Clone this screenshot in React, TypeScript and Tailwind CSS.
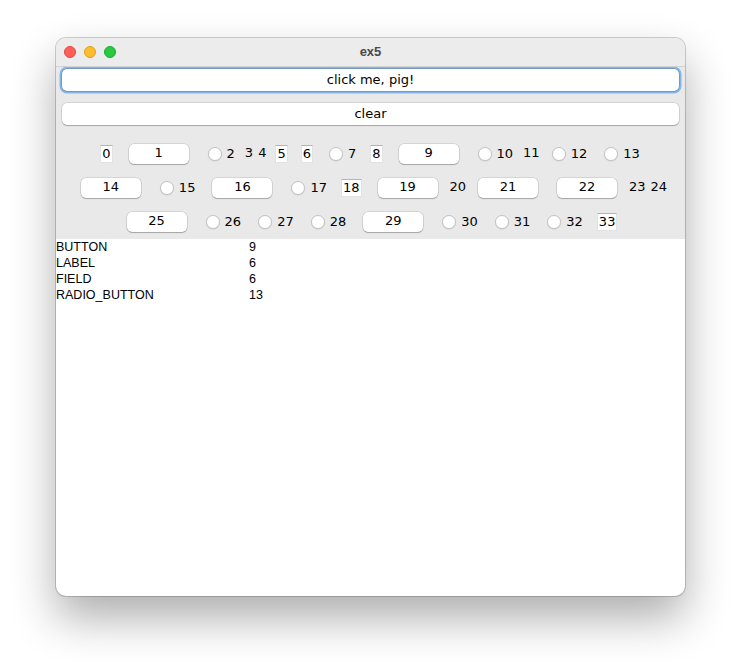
import type { ReactNode } from "react";

type Item =
	| { kind: "button"; text: string }
	| { kind: "radio"; text: string }
	| { kind: "label"; text: string }
	| { kind: "field"; text: string };

const b = (text: string): Item => ({ kind: "button", text });
const r = (text: string): Item => ({ kind: "radio", text });
const l = (text: string): Item => ({ kind: "label", text });
const f = (text: string): Item => ({ kind: "field", text });

const rows: Item[][] = [
	[f("0"), b("1"), r("2"), l("3"), l("4"), f("5"), f("6"), r("7"), f("8"), b("9"), r("10"), l("11"), r("12"), r("13")],
	[b("14"), r("15"), b("16"), r("17"), f("18"), b("19"), l("20"), b("21"), b("22"), l("23"), l("24")],
	[b("25"), r("26"), r("27"), r("28"), b("29"), r("30"), r("31"), r("32"), f("33")],
];

const counts = [
	["BUTTON", "9"],
	["LABEL", "6"],
	["FIELD", "6"],
	["RADIO_BUTTON", "13"],
];

function Control({ item }: { item: Item }) {
	if (item.kind === "button") {
		return (
			<div className="px-[7px]">
				<div className="flex h-5 w-[60px] items-center justify-center rounded-[5px] bg-white pb-px shadow-[0_0_0_0.5px_rgba(0,0,0,0.18),0_1px_1px_rgba(0,0,0,0.22)]">
					{item.text}
				</div>
			</div>
		);
	}
	if (item.kind === "radio") {
		return (
			<div className="flex items-center pr-[5px] pl-[7px]">
				<span className="size-[14px] rounded-full border border-[#c4c4c4] bg-white shadow-[0_0.5px_1px_rgba(0,0,0,0.12)]" />
				<span className="ml-[5px] pt-px">{item.text}</span>
			</div>
		);
	}
	if (item.kind === "field") {
		return (
			<div className="px-[4px]">
				<div className="flex h-[18px] items-center border border-[#e2e2e2] border-t-[#b4b4b4] bg-white px-px leading-none">
					{item.text}
				</div>
			</div>
		);
	}
	return <span className="-mt-px">{item.text}</span>;
}

function Row({ children }: { children: ReactNode }) {
	return <div className="flex h-[29px] items-center justify-center gap-[5px]">{children}</div>;
}

export default function App() {
	return (
		<div className="min-h-[670px] bg-white pt-[38px] pl-[56px] font-['DejaVu_Sans',sans-serif] text-[13px] text-black">
			<div className="flex h-[558px] w-[629px] flex-col overflow-hidden rounded-[10px] bg-white shadow-[0_22px_45px_rgba(0,0,0,0.32),0_0_0_1px_rgba(0,0,0,0.18)]">
				{/* title bar */}
				<div className="relative flex h-[29px] shrink-0 items-center border-b border-[#d2d2d2] bg-[#ececec] px-[8px]">
					<div className="flex gap-[8px]">
						<span className="size-3 rounded-full border border-[#e2463f] bg-[#fe5f57]" />
						<span className="size-3 rounded-full border border-[#e1a116] bg-[#febc2e]" />
						<span className="size-3 rounded-full border border-[#14ae2d] bg-[#28c840]" />
					</div>
					<span className="absolute inset-x-0 text-center font-['Liberation_Sans',sans-serif] text-[13px] font-bold text-[#4a4a4a]">
						ex5
					</span>
				</div>

				{/* control panel */}
				<div className="flex shrink-0 flex-col bg-[#e9e9e9] px-[6px] pt-[2px] pb-[3px]">
					<div className="flex h-[22px] items-center justify-center rounded-[5px] bg-white shadow-[0_0_0_0.5px_rgba(0,0,0,0.3),0_0_0_2.5px_#85b6ea]">
						click me, pig!
					</div>
					<div className="mt-[12px] flex h-[22px] items-center justify-center rounded-[5px] bg-white shadow-[0_0_0_0.5px_rgba(0,0,0,0.18),0_1px_1px_rgba(0,0,0,0.22)]">
						clear
					</div>
					<div className="mt-[14px] flex flex-col gap-[5px]">
						{rows.map((row, i) => (
							<Row key={i}>
								{row.map((item) => (
									<Control key={item.text} item={item} />
								))}
							</Row>
						))}
					</div>
				</div>

				{/* counts */}
				<div className="grid grid-cols-[193px_1fr] font-['Liberation_Sans',sans-serif] text-[12.5px] leading-4">
					{counts.map(([name, n]) => (
						<div key={name} className="contents">
							<span>{name}</span>
							<span>{n}</span>
						</div>
					))}
				</div>
			</div>
		</div>
	);
}
